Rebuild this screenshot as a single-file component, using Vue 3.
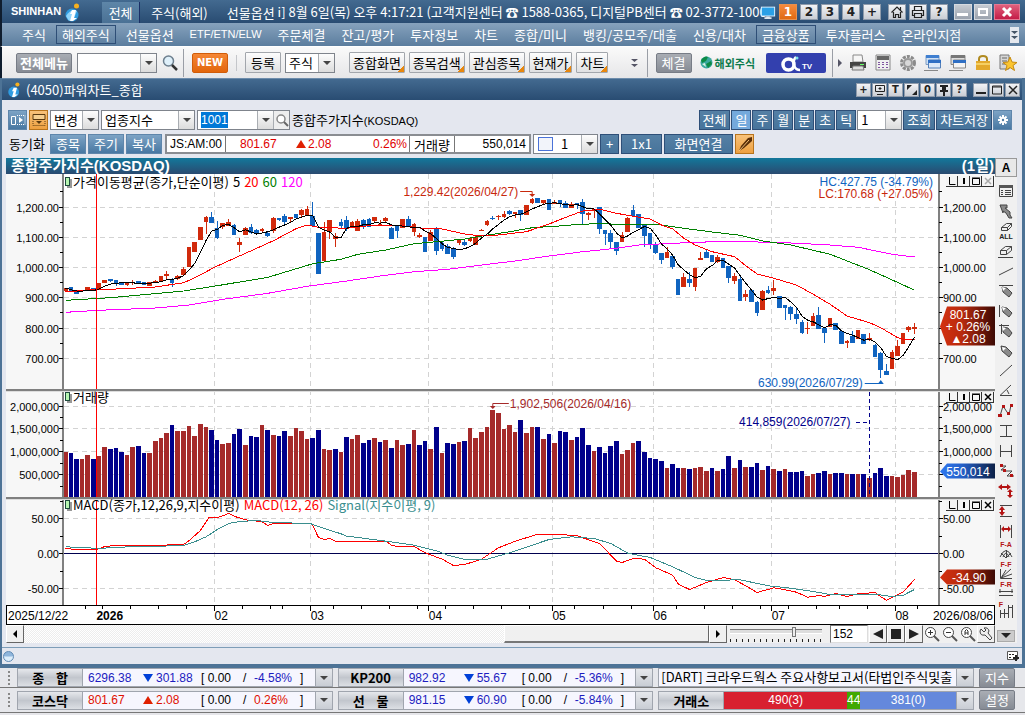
<script setup>
import {ref, computed, onMounted, onBeforeUnmount, useTemplateRef} from 'vue'

const menus = ['주식', '해외주식', '선물옵션', 'ETF/ETN/ELW', '주문체결', '잔고/평가', '투자정보', '차트', '종합/미니', '뱅킹/공모주/대출', '신용/대차', '금융상품', '투자플러스', '온라인지점']
const boxedMenus = ['해외주식', '금융상품']
const quickScreens = ['종합화면', '종목검색', '관심종목', '현재가', '차트']
const periods = ['전체', '일', '주', '월', '분', '초', '틱']

const period = ref('일')
const code = ref('1001')
const barCount = ref('152')
const zoomLevel = ref(70)
const keyword = ref('')

const codeInput = useTemplateRef('codeInput')
const chartBox = useTemplateRef('chartBox')
const width = ref(989)
let observer

onMounted(() => {
    codeInput.value.focus()
    codeInput.value.select()
    width.value = chartBox.value.clientWidth
    observer = new ResizeObserver(() => width.value = chartBox.value.clientWidth)
    observer.observe(chartBox.value)
})
onBeforeUnmount(() => observer.disconnect())

// Candles: [direction, body top, body bottom, high, low], in ticks of 1.1 points below 1369.4
const candles = [
    [1, 399, 407], [0, 396, 409], [0, 408, 416], [0, 406, 409], [1, 396, 406], [0, 400, 404], [1, 384, 402, 384, 406], [1, 375, 384],
    [0, 373, 378, 373, 382], [0, 375, 387, 375, 392], [0, 380, 388], [1, 384, 389, 384, 393], [1, 381, 384, 375, 390], [0, 379, 385, 379, 388],
    [0, 382, 390], [1, 381, 392], [1, 379, 384, 376, 386], [1, 364, 380], [1, 357, 362, 348, 376], [0, 373, 384, 370, 396], [1, 363, 372, 360, 374],
    [1, 342, 359, 336, 359], [1, 276, 335], [1, 261, 290], [1, 216, 254], [1, 186, 200, 183, 236], [0, 186, 203, 171, 203], [0, 219, 248, 199, 254],
    [1, 203, 215, 203, 222], [1, 201, 212, 192, 212], [0, 210, 239, 207, 239], [1, 261, 269, 249, 291], [1, 219, 239, 216, 239], [0, 216, 234, 207, 236],
    [0, 224, 234, 221, 234], [1, 222, 227, 219, 234], [0, 234, 242, 231, 245], [1, 189, 227, 186, 233], [0, 190, 195, 190, 200], [0, 183, 201, 177, 207],
    [1, 186, 193, 186, 203], [0, 177, 188], [1, 165, 180, 162, 188], [1, 162, 180, 153, 180], [0, 183, 212, 141, 212], [0, 234, 356], [1, 231, 317, 201, 317],
    [1, 195, 230, 195, 251], [1, 243, 251, 234, 275], [0, 201, 213, 192, 222], [0, 195, 218, 183, 228], [1, 201, 217, 198, 217], [1, 198, 227, 193, 227],
    [0, 195, 215, 192, 222], [0, 192, 215, 189, 215], [1, 186, 198, 186, 202], [1, 207, 212, 195, 212], [1, 189, 198, 186, 203], [0, 219, 251, 216, 251],
    [0, 213, 228, 213, 248], [1, 192, 218], [0, 192, 215, 183, 215], [1, 207, 230, 204, 242], [1, 240, 245, 234, 248], [0, 246, 291], [1, 231, 257, 225, 257],
    [0, 219, 287, 216, 299], [0, 263, 282, 260, 287], [0, 272, 296, 268, 296], [0, 281, 305, 275, 311], [1, 254, 262, 252, 270], [0, 261, 269, 252, 273],
    [1, 249, 258, 249, 262], [1, 246, 269, 243, 269], [1, 224, 227, 222, 227], [1, 198, 209, 195, 213], [0, 188, 191, 184, 195], [1, 183, 186, 179, 195],
    [1, 177, 186, 168, 189], [0, 168, 177, 165, 180], [1, 171, 178, 171, 188], [0, 165, 179, 165, 197], [1, 150, 179], [1, 132, 143, 128, 147],
    [0, 129, 144], [1, 135, 144, 135, 150], [0, 132, 164], [1, 141, 147, 135, 147], [0, 135, 146, 135, 156], [0, 144, 158, 138, 158], [1, 147, 158, 141, 158],
    [0, 144, 149, 144, 161], [0, 141, 177, 132, 207], [1, 174, 180, 170, 195], [1, 162, 167, 162, 189], [0, 156, 222, 156, 237], [0, 225, 237, 225, 270],
    [0, 234, 260, 225, 279], [0, 261, 287, 261, 299], [1, 240, 260, 231, 260], [1, 189, 230, 186, 230], [0, 165, 182, 150, 182], [0, 177, 218],
    [0, 210, 242, 210, 275], [0, 234, 269, 234, 281], [0, 269, 293, 261, 297], [0, 294, 314, 294, 326], [1, 291, 308, 276, 308], [0, 303, 335, 303, 342],
    [0, 372, 419], [1, 366, 395, 354, 395], [0, 372, 383, 351, 395], [1, 339, 395, 339, 407], [1, 309, 315, 291, 315], [0, 290, 308, 282, 308],
    [0, 300, 320], [1, 306, 320, 300, 324], [0, 309, 338], [0, 333, 368, 333, 383], [1, 363, 377, 354, 386], [0, 372, 437, 363, 437], [1, 417, 425, 405, 437],
    [0, 405, 440], [0, 441, 474, 438, 483], [1, 408, 464, 405, 464], [0, 405, 413, 393, 416], [1, 399, 407, 375, 419], [0, 423, 458], [0, 450, 458, 450, 495],
    [0, 456, 477, 453, 494], [0, 477, 491, 456, 507], [0, 501, 533, 495, 536], [1, 519, 523, 500, 537], [1, 483, 512, 474, 512], [0, 480, 521, 456, 521],
    [0, 518, 534, 518, 563], [1, 489, 515], [0, 505, 527], [0, 528, 566], [1, 558, 564, 555, 579], [0, 543, 563, 528, 563], [1, 525, 552], [0, 537, 566],
    [1, 549, 554, 534, 558], [0, 570, 605, 567, 605], [0, 594, 644, 591, 668], [0, 648, 659, 627, 659], [1, 591, 641, 585, 641], [1, 573, 602, 555, 602],
    [1, 534, 566], [1, 516, 524, 513, 531], [1, 516, 521, 504, 536],
]

// Traded volume in lots of 7,300, negative on a falling bar
const volumes = [
    135, -132, -114, 114, 126, -114, 123, 150, -144, -147, -135, 126, 150, -153, -132, 132, 168, 177, 192, -216, 198, 198, 213, 183, 219, 210, -201,
    -171, 159, 162, -189, -204, 156, -183, -180, 216, -201, 186, -183, -198, 183, 207, 198, 174, -177, -201, 144, 141, -144, 135, -180, 174, 186, -162,
    -171, 177, -165, 171, -147, 171, 156, -159, 201, -156, -168, 144, -210, 132, -162, -159, 165, -168, 207, 177, 195, 210, 261, 252, 204, 216, 195,
    -231, 192, 210, -210, 174, -189, 162, -198, -195, 171, -180, -207, -156, 138, -150, -132, -153, -168, 129, 141, 162, -168, -135, -117, -114, -108,
    87, -99, -87, 87, -84, 87, 90, 78, -87, 78, -84, -123, 87, -111, 90, -90, -102, 81, -93, 84, -78, 84, -75, -75, -78, 63, 69, -72, -78, 69, -72, -72,
    69, -69, 69, -69, 57, -72, -87, -63, 63, 60, 66, 81, 75,
]

// Turning points of the slow averages: [bar, ticks]
const ma20 = [[0, 411], [4, 405], [8, 403], [16, 396], [21, 383], [22, 376], [24.5, 355], [26.5, 337], [30, 310], [34, 280], [37, 257], [41, 221], [43, 210], [45, 217], [50, 220], [55, 210], [59, 210], [64, 221], [67, 222], [71, 237], [74, 243], [77, 240], [82, 230], [86, 207], [89, 187], [92, 168], [95, 163], [98, 175], [100, 181], [104, 192], [106, 210], [108, 222], [110, 250], [112, 270], [115, 290], [119, 305], [121, 332], [123, 357], [126, 370], [130, 390], [133, 418], [136, 448], [139, 483], [143, 503], [145, 518], [148, 548], [149, 553], [151, 553]]
const ma60 = [[0, 436], [8, 428], [21, 408], [27, 392], [36, 367], [44, 326], [49, 313], [52, 298], [57, 285], [62, 266], [66, 260], [71, 252], [74, 243], [79, 230], [83, 218], [87, 214], [90, 210], [94, 206], [100, 208], [106, 210], [110, 220], [115, 231], [120, 241], [124, 258], [129, 270], [136, 298], [143, 344], [149, 390], [151, 406]]
const ma120 = [[0, 472], [6, 466], [16, 459], [22, 450], [28, 433], [36, 415], [43, 394], [50, 378], [56, 363], [62, 350], [68, 343], [74, 330], [80, 318], [86, 303], [92, 290], [98, 280], [102, 270], [108, 265], [117, 259], [121, 260], [128, 263], [136, 270], [141, 277], [147, 298], [151, 306]]
const macd = [[0, 490], [2, 493], [5.5, 493], [7, 484], [9, 481], [13, 482], [17, 481], [19, 478], [21, 478], [22, 466], [24, 436], [25.5, 398], [27, 398], [29, 385], [30.5, 396], [32, 404], [35, 410], [36, 421], [37, 415], [43.5, 415], [44, 422], [45, 457], [46, 463], [47, 460], [48, 468], [55, 470], [57, 468], [58, 480], [59, 484], [62, 484], [64, 503], [67, 522], [69, 541], [71, 538], [74, 522], [77, 488], [80, 468], [84, 447], [88, 448], [91, 452], [95, 475], [98, 528], [99, 532], [101, 520], [103, 522], [105, 548], [108, 570], [109, 597], [111, 613], [114, 592], [117, 577], [119, 584], [121, 602], [123, 622], [126, 608], [128, 614], [130, 621], [132, 636], [134, 631], [135, 634], [137, 625], [139, 634], [141, 626], [144, 622], [145, 635], [146, 645], [149, 620], [151, 583]]
const signal = [[0, 485], [4, 488], [6, 490], [9, 486], [15, 484], [21, 481], [23, 470], [25, 455], [27, 433], [29, 415], [31, 409], [34, 406], [37, 412], [43.5, 415], [46, 430], [49, 446], [50, 453], [52, 457], [57, 468], [62, 480], [66, 497], [68, 510], [71, 523], [75, 522], [79, 503], [83, 480], [86, 463], [90, 455], [94, 460], [97, 475], [100, 504], [104, 517], [108, 545], [112, 577], [114, 586], [120, 584], [125, 602], [128, 607], [133, 619], [136, 628], [144, 627], [147, 634], [149, 630], [151, 613]]

const LEFT = 57
const right = computed(() => width.value - 56)
const step = computed(() => (right.value - LEFT - 27) / (candles.length - 1))

const barX = i => LEFT + 2.5 + i * step.value
const tickY = t => t / 3 - 19
const priceY = p => 32.5 + (1200 - p) * 0.303
const volumeY = v => 323 - v * 22.7 / 500000
const macdY = v => 379.5 - v * 0.7

const toPoints = (list, toY) => list.map(([i, v]) => `${barX(i).toFixed(1)},${toY(v).toFixed(1)}`).join(' ')

const bars = computed(() => candles.map(([up, top, bottom, high = top, low = bottom], i) => {
    const x = LEFT + Math.round(i * step.value)
    const w = LEFT + Math.round((i + 1) * step.value) - x - 1
    const vol = Math.abs(volumes[i]) / 3
    return {
        x, w,
        fill: up ? '#d12a0c' : '#1064c0',
        y: Math.round(tickY(top)),
        h: Math.max(1, Math.round((bottom - top) / 3)),
        wickY: Math.round(tickY(high)),
        wickH: Math.max(1, Math.round((low - high) / 3)),
        volY: 323 - vol,
        volH: vol,
        volFill: volumes[i] > 0 ? '#a52a2a' : '#00008b',
    }
}))

// five day average of the closes
const ma5 = computed(() => {
    const closes = candles.map(([up, top, bottom]) => up ? top : bottom)
    return closes.map((_, i) => {
        const part = closes.slice(Math.max(0, i - 4), i + 1)
        return [i, part.reduce((a, b) => a + b, 0) / part.length]
    })
})

const lines = computed(() => [
    {color: '#f0f', points: toPoints(ma120, tickY)},
    {color: '#008000', points: toPoints(ma60, tickY)},
    {color: '#f00', points: toPoints(ma20, tickY)},
    {color: '#000', points: toPoints(ma5.value, tickY)},
    {color: '#f00', points: toPoints(macd, v => macdY((505 - v) / 2.1))},
    {color: '#3a8e8e', points: toPoints(signal, v => macdY((505 - v) / 2.1))},
])

const levels = [
    ...[1200, 1100, 1000, 900, 800, 700].map(v => ({y: Math.round(priceY(v)) + 0.5, label: v.toLocaleString('en-US') + '.00'})),
    ...[2000000, 1500000, 1000000, 500000].map(v => ({y: Math.floor(volumeY(v)) + 0.5, label: v.toLocaleString('en-US')})),
    ...[50, 0, -50].map(v => ({y: macdY(v), label: v.toFixed(2)})),
]
const hiddenRight = ['800.00', '500,000']
const minorLevels = [17, 48, 78, 108, 138, 169, 243, 266, 289, 312, 327, 362, 397, 414]

const months = [{at: 26.5, label: '02'}, {at: 43.6, label: '03'}, {at: 64.6, label: '04'}, {at: 86.6, label: '05'}, {at: 104.6, label: '06'}, {at: 125.6, label: '07'}, {at: 147.6, label: '08'}]
const dateTicks = [3.5, 6.5, 11.5, 16.5, 21.5, 31.5, 36.5, 38.6, 47.6, 52.6, 57.6, 62.6, 67.6, 72.6, 77.6, 82.6, 90.6, 95.6, 100.6, 108.6, 113.6, 118.6, 123.6, 128.6, 133.6, 137.6, 142.6, 151.6]

const panels = ['price', 'volume', 'macd']

const drawTools = [
    {name: '목록', fill: 'M3 4h14v3H3z', line: 'M3.5 4.5h13v11h-13zM5 9.5h2M9 9.5h6M5 11.5h2M9 11.5h6M5 13.5h2M9 13.5h6'},
    {name: '되돌리기', grey: 'M4 4h7v3h-2l5 4v3l2 3h-3l-3-5-3-2v2z'},
    {name: '모두 지우기', line: 'M5.500 6.500l5-4h5l-4 4zM5.500 6.500v3h6l4-4v-3M11.500 6.500v3', text: 'ALL', textY: 18},
    {name: '지우기', line: 'M4.500 9.500l5-4h6l-5 4zM4.500 9.500v4h6l5-4v-4M10.500 9.500v4M2 16.500h15'},
    {name: '추세선', line: 'M3 14l14-7'},
    {name: '수평선', line: 'M3 4.500h14', grey: 'M6 6l5 1 5 5-3 4-6-5z', pen: true},
    {name: '수직선', line: 'M3.500 4v12', grey: 'M6 6l5 1 5 5-3 4-6-5z', pen: true},
    {name: '십자선', line: 'M3 4.500h10M5.500 3v10', grey: 'M7 6l5 1 4 5-3 4-6-5z', pen: true},
    {name: '펜', grey: 'M5 5l5 1 6 6-3 4-7-6z', pen: true},
    {name: '직선', line: 'M4 15l12-11'},
    {name: '각도', line: 'M15 4L4 14.500h12M11 9l2 4'},
    {name: '파동', line: 'M4 15L7 5l6 9 2-10', red: 'M2 13h4v3H2zM6 4h3v3H6zM11 11h3v3h-3zM14 3h3v3h-3z'},
    {name: '구간', line: 'M4 4.500h12M4 15.500h12M10.500 5v10'},
    {name: '폭', line: 'M4.500 4v12M15.500 4v12M5 10.500h10'},
    {name: '지그재그', line: 'M4 5h6L5 9h5M10 10h6l-5 5h7', red: 'M4 3h3v3H4zM7 8h3v3H7zM14 13h3v3h-3z'},
    {name: '이동', red: 'M2 6l4-3v2h5V3l4 3-4 3V7H6v2zM14 8l3 3h-2v3h2l-3 3-3-3h2v-3h-2z'},
    {name: '높이', line: 'M4 4.500h12M4 15.500h12', red: 'M6 5l3 4H7v2h2l-3 4-3-4h2V9H3z'},
    {name: '너비', line: 'M4.500 4v13M15.500 4v13', red: 'M5 8l3-3v2h4V5l3 3-3 3V9H8v2z'},
    {name: '피보나치 아크', text: 'F-A', textY: 6, line: 'M4 16q6-13 12 0M7 16q3-8 6 0M10.500 9v8M10 17L5 12M10 17l5-5', redText: true},
    {name: '피보나치 팬', text: 'F-F', textY: 6, line: 'M4.500 8v9.500H16M5 17L15 8M5 17l11-4M5 17l5-8', redText: true},
    {name: '피보나치 되돌림', text: 'F-R', textY: 6, line: 'M3 10.500h14M4 8v4M16 8v4M3 14.500h14', redText: true},
    {name: '피보나치 시간대', text: 'F', textY: 6, line: 'M4.500 9v8M8.500 8v9M12.500 4v13M16.500 4v13M4 12.500h8M12 6.500h4', redText: true, left: true},
]

const tickers = [
    {rows: [
        {name: '종    합', value: '6296.38', up: false, diff: '301.88', rate: '-4.58%'},
        {name: 'KP200', value: '982.92', up: false, diff: '55.67', rate: '-5.36%'},
    ]},
    {rows: [
        {name: '코스닥', value: '801.67', up: true, diff: '2.08', rate: '0.26%'},
        {name: '선    물', value: '981.15', up: false, diff: '60.90', rate: '-5.84%'},
    ]},
]
</script>

<template>
    <div class="terminal">
        <header class="titlebar">
            <span class="brand">SHINHAN</span>
            <svg class="brand-mark" width="18" height="20" viewBox="0 0 18 20">
                <circle cx="8" cy="13" r="6.500" fill="#2f9be0"/>
                <path d="M2 14q5-8 11-5l-3 7-5 3z" fill="#8fd4fa"/>
                <path d="M8 8h4l-2 8h3l-4 3H6l2-7H6z" fill="#fff"/>
                <circle cx="12.500" cy="4" r="2.500" fill="#f6b01e"/>
            </svg>
            <button class="world active">전체</button>
            <button class="world">주식(해외)</button>
            <button class="world">선물옵션</button>
            <p class="notice">i] 8월 6일(목) 오후 4:17:21 (고객지원센터 ☎ 1588-0365, 디지털PB센터 ☎ 02-3772-1000</p>
            <div class="title-tools">
                <svg class="monitor" width="16" height="18" viewBox="0 0 18 18">
                    <path d="M1 3h16v11H1z" fill="#eaf6ff"/>
                    <path d="M2 4h14v9H2z" fill="#2aa0e6"/>
                    <path d="M7 14h4v1h2v2H5v-2h2z" fill="#dfe7ee"/>
                </svg>
                <button class="chip hot">1</button>
                <button class="chip">2</button>
                <button class="chip">3</button>
                <button class="chip">4</button>
                <button class="chip">+</button>
                <button class="chip group" aria-label="홈">
                    <svg width="14" height="14" viewBox="0 0 14 14"><path d="M1.500 7.500L7 2l5.500 5.500M3.500 7v5.500h2v-3h3v3h2V7M10.500 2v3" fill="none" stroke="#222" stroke-width="1.200"/></svg>
                </button>
                <button class="chip" aria-label="인쇄">
                    <svg width="14" height="14" viewBox="0 0 14 14"><path d="M3.500 5V1.500h7V5M3.500 10.500h-2v-5h11v5h-2M3.500 8.500h7v4h-7z" fill="none" stroke="#222" stroke-width="1.200"/></svg>
                </button>
                <button class="chip">?</button>
                <div class="wins">
                    <button class="win" aria-label="최소화"><svg width="16" height="14" viewBox="0 0 16 14"><path d="M2 8h11v3H2z" fill="#fff"/></svg></button>
                    <button class="win" aria-label="최대화"><svg width="16" height="14" viewBox="0 0 16 14"><path d="M4 4h8v6H4z" fill="none" stroke="#fff" stroke-width="2"/></svg></button>
                    <button class="win close" aria-label="닫기"><svg width="24" height="14" viewBox="0 0 24 14"><path d="M8 3l8 8M16 3l-8 8" stroke="#fff" stroke-width="3"/></svg></button>
                </div>
            </div>
        </header>

        <nav class="menubar">
            <a v-for="menu in menus" :key="menu" href="#" :class="{boxed: boxedMenus.includes(menu), latin: menu.startsWith('ETF')}">{{ menu }}</a>
            <button class="more" aria-label="더보기"><svg width="9" height="14" viewBox="0 0 9 14"><path d="M1 3h7L4.500 6zM1 8h7l-3.500 3z" fill="#456"/></svg></button>
        </nav>

        <div class="toolbar">
            <button class="pill">전체메뉴</button>
            <label class="combo search-box"><input v-model="keyword" aria-label="화면 검색"><i></i></label>
            <svg class="lens" width="18" height="18" viewBox="0 0 18 18">
                <circle cx="7.500" cy="7" r="5" fill="#dff0fa" stroke="#6d7f8e" stroke-width="1.500"/>
                <path d="M11 11l5 5" stroke="#333" stroke-width="2.500"/>
            </svg>
            <span class="bar-line"></span>
            <button class="new">NEW</button>
            <span class="bar-line thin"></span>
            <button class="flat">등록</button>
            <label class="combo kind"><select aria-label="상품"><option>주식</option></select><i></i></label>
            <div class="quick">
                <button v-for="screen in quickScreens" :key="screen" class="flat corner">{{ screen }}</button>
            </div>
            <svg class="chevrons" width="9" height="14" viewBox="0 0 9 14"><path d="M1 3h7L4.500 6zM1 8h7l-3.500 3z" fill="#556"/></svg>
            <span class="bar-line"></span>
            <button class="pill slim">체결</button>
            <a href="#" class="overseas">
                <svg width="13" height="13" viewBox="0 0 13 13"><circle cx="6.500" cy="6.500" r="6" fill="#3ba9a0"/><path d="M1 4q4-5 7-3l-2 4-4 2zM6 8l5-3 1 3-4 4z" fill="#0b8b45"/><path d="M2 8l3-1 1 4z" fill="#d8f2e4"/></svg>
                해외주식
            </a>
            <button class="tv" aria-label="알파TV">
                <svg width="22" height="18" viewBox="0 0 22 18">
                    <circle cx="8.500" cy="9.500" r="5.500" fill="none" stroke="#fff" stroke-width="3.500"/>
                    <path d="M16 2q-4 4-1.500 9.500Q16 15 20 15" fill="none" stroke="#fff" stroke-width="2.500"/>
                    <circle cx="17" cy="3" r="1.500" fill="#7de0e8"/>
                </svg>
                <span>TV</span>
            </button>
            <span class="bar-line end"></span>
            <div class="tool-icons">
                <svg width="4" height="8" viewBox="0 0 4 8"><path d="M0 0l4 4-4 4z" fill="#556"/></svg>
                <svg width="18" height="18" viewBox="0 0 18 18"><path d="M4 1h9l1 7H4z" fill="#f6f6f6" stroke="#888"/><path d="M1 8h16v6H1z" fill="#444"/><path d="M4 12h10l1 4H3z" fill="#ddd" stroke="#777"/><path d="M11 10h4v1h-4z" fill="#6f6"/></svg>
                <svg width="18" height="18" viewBox="0 0 18 18"><path d="M2 1h14v15H2z" fill="#f0f0f0" stroke="#888"/><path d="M3 2h12v4H3z" fill="#666"/><path d="M4 8h2v1H4zM8 8h2v1H8zM12 8h2v1h-2zM4 10h2v1H4zM8 10h2v1H8zM12 10h2v1h-2zM4 13h2v1H4zM8 13h2v1H8zM12 13h2v1h-2z" fill="#8054a0"/></svg>
                <svg width="18" height="18" viewBox="0 0 18 18"><circle cx="9" cy="9" r="6.500" fill="none" stroke="#8b8b8b" stroke-width="3" stroke-dasharray="3 1.100"/><circle cx="9" cy="9" r="4" fill="#d8d8d8" stroke="#999" stroke-width="2"/></svg>
                <svg width="18" height="18" viewBox="0 0 18 18"><path d="M2 1.500h13v9H2z" fill="#cfe0f4" stroke="#7d9cc4"/><path d="M2 1h13v3H2z" fill="#3f7fd0"/><path d="M4.500 6h12v8h-12z" fill="#dce9f9" stroke="#5580b8"/><path d="M4 6h13v3H4z" fill="#2f6fc4"/><path d="M0 16.500h14" stroke="#888"/></svg>
                <svg width="18" height="18" viewBox="0 0 18 18"><path d="M2 1.500h14v9H2z" fill="#ddd" stroke="#888"/><path d="M2 1h14v3H2z" fill="#777"/><path d="M4.500 6h12v8h-12z" fill="#f4f4f4" stroke="#888"/><path d="M4 6h13v3H4z" fill="#2f6fc4"/><path d="M0 16.500h14" stroke="#888"/></svg>
                <svg width="18" height="18" viewBox="0 0 18 18"><path d="M5 8V5q0-3 4-3t4 3v3" fill="none" stroke="#b08a20" stroke-width="2"/><path d="M2 7h14v9H2z" fill="#e3a92c"/><path d="M2 9h14v2H2z" fill="#f5cf62"/></svg>
                <svg width="18" height="18" viewBox="0 0 18 18"><path d="M1 1h9v14H1z" fill="#d6d6d6" stroke="#777"/><path d="M3 4h5M3 7h5M3 10h4" stroke="#666"/><path d="M11 3l2 5 5 .500-4 3 1.500 5-4.500-3-4.500 3L8 11.500l-4-3L9 8z" fill="#fbc531" stroke="#c58a12"/></svg>
            </div>
        </div>

        <section class="window">
            <div class="caption">
                <svg width="15" height="17" viewBox="0 0 18 20">
                    <circle cx="8" cy="13" r="6.500" fill="#2f9be0"/>
                    <path d="M8 8h4l-2 8h3l-4 3H6l2-7H6z" fill="#fff"/>
                    <circle cx="12.500" cy="4" r="2.500" fill="#f6b01e"/>
                </svg>
                <h1>(4050)파워차트_종합</h1>
                <div class="caption-tools">
                    <button>+</button>
                    <button aria-label="화면"><svg width="12" height="12" viewBox="0 0 12 12"><path d="M1.500 1.500h9v6h-9zM3 10.500h6M6 3v3M4.500 4.500h3" fill="none" stroke="#222"/></svg></button>
                    <button>T</button>
                    <button aria-label="크기"><svg width="12" height="12" viewBox="0 0 12 12"><path d="M1 1h5L1 6zM11 11H6l5-5z" fill="#222"/></svg></button>
                    <button>0</button>
                    <button aria-label="고정"><svg width="12" height="12" viewBox="0 0 12 12"><path d="M2 1h8v2H8v3h2v2H2V6h2V3H2zM5 8h2v4H5z" fill="#222"/></svg></button>
                    <button>?</button>
                    <button class="group" aria-label="최소화"><svg width="12" height="12" viewBox="0 0 12 12"><path d="M1 8h10v2H1z" fill="#222"/></svg></button>
                    <button aria-label="최대화"><svg width="12" height="12" viewBox="0 0 12 12"><path d="M1.500 2h9v8h-9zM1 3h10" fill="none" stroke="#222"/></svg></button>
                    <button aria-label="닫기"><svg width="12" height="12" viewBox="0 0 12 12"><path d="M2 2l8 8M10 2l-8 8" stroke="#222" stroke-width="1.500"/></svg></button>
                </div>
            </div>

            <div class="controls">
                <button class="blue square" aria-label="패널"><svg width="16" height="12" viewBox="0 0 16 12"><path d="M1.500 2.500h4v8h-4z" fill="none" stroke="#fff"/><path d="M7 1.500h8v9H7" fill="none" stroke="#fff" stroke-dasharray="1 1"/><path d="M9 3l4 3-4 3z" fill="#fff"/></svg></button>
                <button class="orange square" aria-label="펼치기"><svg width="16" height="14" viewBox="0 0 16 14"><path d="M2 1.500h12v5H2z" fill="#f6cf8f" stroke="#5a3a10"/><path d="M2 8v4.500h12V8" fill="none" stroke="#5a3a10" stroke-dasharray="1 1"/><path d="M5 8h6l-3 3z" fill="#5a3a10"/></svg></button>
                <label class="combo w49"><select aria-label="설정"><option>변경</option></select><i></i></label>
                <label class="combo w94"><select aria-label="구분"><option>업종지수</option></select><i></i></label>
                <div class="combo w93 code">
                    <input ref="codeInput" v-model="code" class="num" aria-label="종목코드"><i></i>
                    <button aria-label="찾기"><svg width="14" height="14" viewBox="0 0 14 14"><circle cx="6" cy="6" r="4" fill="#fff" stroke="#888" stroke-width="1.500"/><path d="M9 9l4 4" stroke="#666" stroke-width="2"/></svg></button>
                </div>
                <span class="issue">종합주가지수<span class="latin">(KOSDAQ)</span></span>
                <div class="right-side">
                    <button v-for="name in periods" :key="name" class="steel" :class="{on: name === period}" @click="period = name">{{ name }}</button>
                    <label class="combo w45"><select aria-label="간격"><option>1</option></select><i></i></label>
                    <button class="steel">조회</button>
                    <button class="steel">차트저장</button>
                    <button class="blue square gear" aria-label="설정"><svg width="12" height="12" viewBox="0 0 12 12"><path d="M6 1v10M1 6h10M2.500 2.500l7 7M9.500 2.500l-7 7" stroke="#fff" stroke-width="2"/><circle cx="6" cy="6" r="3" fill="#fff"/><circle cx="6" cy="6" r="1.200" fill="#4f7ba3"/></svg></button>
                </div>
            </div>

            <div class="controls second">
                <span class="sync">동기화</span>
                <button class="blue">종목</button>
                <button class="blue">주기</button>
                <button class="blue">복사</button>
                <div class="quote">
                    <span class="src num">JS:AM:00</span>
                    <span class="nums num"><b>801.67</b><b><i class="tri up"></i>2.08</b><b class="end">0.26%</b></span>
                    <span class="cap">거래량</span>
                    <span class="vol num">550,014</span>
                </div>
                <label class="combo w65"><span class="swatch"></span><select aria-label="배열"><option>1</option></select><i></i></label>
                <button class="steel plus">+</button>
                <button class="steel grid">1x1</button>
                <button class="steel link">화면연결</button>
                <button class="orange square" aria-label="그리기"><svg width="16" height="16" viewBox="0 0 16 16"><path d="M2 15l2-5 7-8 4-1v4L7 12z" fill="#5a2f08"/><path d="M2 15L12 4" stroke="#f4c27a"/></svg></button>
            </div>

            <div class="work">
                <div class="chart">
                    <div class="chart-title"><h2>종합주가지수(KOSDAQ)</h2><span>(1일)</span></div>
                    <div ref="chartBox" class="canvas">
                        <svg :width="width" height="451" class="plot">
                            <defs>
                                <linearGradient id="tagRed"><stop offset="0" stop-color="#d4300f"/><stop offset=".4" stop-color="#b82a0e"/><stop offset="1" stop-color="#3c0a04"/></linearGradient>
                                <linearGradient id="tagBlue"><stop offset="0" stop-color="#2f78f0"/><stop offset=".4" stop-color="#2560c8"/><stop offset="1" stop-color="#0c2047"/></linearGradient>
                            </defs>
                            <rect width="100%" height="451" fill="#f7f7f7"/>
                            <rect :x="LEFT" y="0" :width="right - LEFT" height="431" fill="#fff"/>

                            <g shape-rendering="crispEdges">
                                <g stroke="#d3d3d3" stroke-dasharray="5 4">
                                    <template v-for="level in levels" :key="level.label">
                                        <line v-if="level.label !== '0.00'" :x1="LEFT + 1" :x2="right" :y1="level.y" :y2="level.y"/>
                                    </template>
                                    <line v-for="month in months" :key="month.label" :x1="barX(month.at)" :x2="barX(month.at)" y1="0" y2="431"/>
                                </g>
                                <line :x1="LEFT" :x2="right" y1="379.5" y2="379.5" stroke="#00004f"/>

                                <rect v-for="(bar, i) in bars" :key="'v' + i" :x="bar.x" :y="bar.volY" :width="bar.w" :height="bar.volH" :fill="bar.volFill"/>
                                <g v-for="(bar, i) in bars" :key="'c' + i" :fill="bar.fill">
                                    <rect :x="bar.x" :y="bar.y" :width="bar.w" :height="bar.h"/>
                                    <rect :x="bar.x + 2" :y="bar.wickY" width="1" :height="bar.wickH"/>
                                </g>
                                <polyline v-for="(line, i) in lines" :key="'l' + i" :points="line.points" :stroke="line.color" fill="none"/>

                                <line :x1="barX(5.5)" :x2="barX(5.5)" y1="0" y2="431" stroke="#f00"/>
                                <path :d="`M${LEFT} 0V431M${right} 0V431`" stroke="#808080" stroke-width="2"/>
                                <path :d="`M0 216H${width}M0 324H${width}`" stroke="#808080" stroke-width="2"/>
                                <path :d="`M0 217.500H${width}M0 325.500H${width}`" stroke="#ddd"/>
                                <g stroke="#000">
                                    <path v-for="level in levels" :key="level.label" :d="`M${LEFT - 4} ${level.y}h4M${right} ${level.y}h4`"/>
                                    <path v-for="y in minorLevels" :key="y" :d="`M${LEFT - 3} ${y + 0.5}h3M${right} ${y + 0.5}h3`"/>
                                </g>
                                <rect x="0.500" y="431.500" :width="width - 1" height="19" fill="#fff" stroke="#000"/>
                                <line v-for="at in dateTicks" :key="at" :x1="barX(at)" :x2="barX(at)" y1="432" y2="435" stroke="#000"/>
                                <line v-for="month in months" :key="month.label" :x1="barX(month.at)" :x2="barX(month.at)" y1="432" y2="437" stroke="#000"/>
                            </g>

                            <g v-for="level in levels" :key="level.label" class="axis">
                                <text :x="LEFT - 4" :y="level.y + 4" text-anchor="end">{{ level.label }}</text>
                                <text v-if="!hiddenRight.includes(level.label)" :x="right + 4" :y="level.y + 4">{{ level.label }}</text>
                            </g>

                            <g v-for="y in [3, 218, 326]" :key="y">
                                <rect x="61" :y="y + 2" width="5" height="9" fill="#999"/>
                                <rect x="59.500" :y="y + 0.5" width="4" height="8" fill="#b6f5b0" stroke="#1e4a3c"/>
                            </g>
                            <g class="legend">
                                <text x="67" y="13">가격이동평균(종가,단순이평)<tspan dx="4">5</tspan><tspan dx="4" fill="#f00">20</tspan><tspan dx="4" fill="#008000">60</tspan><tspan dx="4" fill="#f0f">120</tspan></text>
                                <text x="67" y="228">거래량</text>
                                <text x="67" y="336">MACD(종가,12,26,9,지수이평)<tspan dx="4" fill="#f00">MACD(12, 26)</tspan><tspan dx="4" fill="#3a8e8e">Signal(지수이평, 9)</tspan></text>
                            </g>

                            <text :x="right - 6" y="12" text-anchor="end" fill="#1064c0">HC:427.75 (-34.79%)</text>
                            <text :x="right - 6" y="24" text-anchor="end" fill="#c8280c">LC:170.68 (+27.05%)</text>

                            <g fill="#c8280c">
                                <text :x="barX(83) - 14" y="22" text-anchor="end">1,229.42(2026/04/27)</text>
                                <path :d="`M${barX(83) - 12} 17.500h12v3`" fill="none" stroke="#c8280c"/>
                                <path :d="`M${barX(83) - 3} 20h6l-3 3z`"/>
                            </g>
                            <g fill="#1064c0">
                                <text :x="barX(145) - 18" y="213" text-anchor="end">630.99(2026/07/29)</text>
                                <path :d="`M${barX(145) - 16} 209.500h18`" stroke="#1064c0"/>
                                <path :d="`M${barX(145) - 3} 210h6l-3-4z`"/>
                            </g>
                            <g fill="#a52a2a">
                                <text :x="barX(76) + 17" y="234">1,902,506(2026/04/16)</text>
                                <path :d="`M${barX(76) + 16} 229.500h-16v3`" fill="none" stroke="#a52a2a"/>
                                <path :d="`M${barX(76) - 3} 232h6l-3 3z`"/>
                            </g>
                            <text :x="barX(143) - 19" y="252" text-anchor="end" fill="#00008b">414,859(2026/07/27)</text>
                            <path :d="`M${barX(143) - 14} 248.500h14M${barX(143)} 218v103`" fill="none" stroke="#00008b" stroke-dasharray="4 3" shape-rendering="crispEdges"/>

                            <g text-anchor="middle">
                                <path :d="`M${right + 1} 152.500l7-20H${width}v39H${right + 8}z`" fill="url(#tagRed)"/>
                                <g fill="#fff">
                                    <text :x="right + 29" y="145">801.67</text>
                                    <text :x="right + 29" y="157">+ 0.26%</text>
                                    <text :x="right + 29" y="169">▲2.08</text>
                                </g>
                                <path :d="`M${right + 1} 297.500l7-8H${width}v15H${right + 8}z`" fill="url(#tagBlue)"/>
                                <text :x="right + 29" y="302" fill="#fff">550,014</text>
                                <path :d="`M${right + 1} 403.500l7-8H${width}v15H${right + 8}z`" fill="url(#tagRed)"/>
                                <text :x="right + 30" y="408" fill="#fff">-34.90</text>
                            </g>

                            <text x="2" y="446">2025/12/22</text>
                            <text :x="barX(5.5)" y="446" font-weight="bold">2026</text>
                            <text v-for="month in months" :key="month.label" :x="barX(month.at)" y="446">{{ month.label }}</text>
                            <text :x="width - 2" y="446" text-anchor="end">2026/08/06</text>
                        </svg>
                        <div v-for="panel in panels" :key="panel" class="panel-buttons" :class="panel">
                            <button aria-label="축소"><svg width="10" height="10" viewBox="0 0 10 10"><path d="M2.500 1v7.500h6" fill="none" stroke="#000"/></svg></button>
                            <button aria-label="분할"><svg width="10" height="10" viewBox="0 0 10 10"><path d="M4 2h2v6H4z"/></svg></button>
                            <button aria-label="확대"><svg width="10" height="10" viewBox="0 0 10 10"><path d="M1.500 2.500h7v6h-7zM1 2h8" fill="none" stroke="#000"/></svg></button>
                            <button aria-label="닫기"><svg width="10" height="10" viewBox="0 0 10 10"><path d="M2 2l6 6M8 2L2 8" :stroke="panel === 'price' ? '#aaa' : '#000'" stroke-width="1.500"/></svg></button>
                        </div>
                    </div>

                    <div class="bottom">
                        <button class="raised" aria-label="이전"><svg width="6" height="8" viewBox="0 0 6 8"><path d="M5 0v8L1 4z"/></svg></button>
                        <div class="track"><div class="thumb"></div></div>
                        <button class="raised" aria-label="다음"><svg width="6" height="8" viewBox="0 0 6 8"><path d="M1 0v8l4-4z"/></svg></button>
                        <div class="zoomer"><input v-model="zoomLevel" type="range" min="0" max="100" aria-label="확대 비율"></div>
                        <input v-model="barCount" class="count num" aria-label="봉 개수">
                        <button class="raised" aria-label="뒤로"><svg width="12" height="12" viewBox="0 0 12 12"><path d="M11 1v10L1 6z" fill="#222"/></svg></button>
                        <button class="raised" aria-label="정지"><svg width="12" height="12" viewBox="0 0 12 12"><path d="M1 1h10v10H1z" fill="#222"/></svg></button>
                        <button class="raised" aria-label="앞으로"><svg width="12" height="12" viewBox="0 0 12 12"><path d="M1 1v10l10-5z" fill="#222"/></svg></button>
                        <button class="bare" aria-label="확대"><svg width="16" height="16" viewBox="0 0 16 16"><circle cx="6.500" cy="6.500" r="5" fill="#fff" stroke="#444"/><path d="M4 6.500h5M6.500 4v5" stroke="#333"/><path d="M10 10l5 5" stroke="#555" stroke-width="2"/></svg></button>
                        <button class="bare" aria-label="축소"><svg width="16" height="16" viewBox="0 0 16 16"><circle cx="6.500" cy="6.500" r="5" fill="#fff" stroke="#444"/><path d="M4 6.500h5" stroke="#333"/><path d="M10 10l5 5" stroke="#555" stroke-width="2"/></svg></button>
                        <button class="bare" aria-label="전체 보기"><svg width="16" height="16" viewBox="0 0 16 16"><circle cx="6.500" cy="6.500" r="5" fill="#fff" stroke="#444"/><path d="M5 9V5l1.500-1.500L8 5v4M5 7h3" fill="none" stroke="#333"/><path d="M10 10l5 5" stroke="#555" stroke-width="2"/></svg></button>
                        <button class="raised" aria-label="도구"><svg width="14" height="14" viewBox="0 0 14 14"><path d="M2 2l3 3 2-2-2-2q4-1 5 3l-1 2 4 5-2 2-5-5q-5 1-5-4z" fill="#eee" stroke="#444"/></svg></button>
                    </div>
                </div>

                <aside class="rail">
                    <button class="auto">A</button>
                    <button v-for="tool in drawTools" :key="tool.name" class="draw" :aria-label="tool.name">
                        <svg width="20" height="20" viewBox="0 0 20 20">
                            <path v-if="tool.grey" :d="tool.grey" fill="#8a8a8a" stroke="#444"/>
                            <path v-if="tool.pen" d="M6 6l4 1-3 3z" fill="#fff"/>
                            <path v-if="tool.line" :d="tool.line" fill="none" stroke="#444"/>
                            <path v-if="tool.fill" :d="tool.fill" fill="#555"/>
                            <path v-if="tool.red" :d="tool.red" fill="#b41414"/>
                            <text v-if="tool.text" :x="tool.left ? 5 : 10" :y="tool.textY" text-anchor="middle" :fill="tool.redText ? '#b41414' : '#222'">{{ tool.text }}</text>
                        </svg>
                    </button>
                    <button class="down" aria-label="더보기"><svg width="10" height="6" viewBox="0 0 10 6"><path d="M0 0h10L5 5z" fill="#222"/></svg></button>
                </aside>
            </div>

            <footer class="status">
                <span class="orb"></span>
                <button aria-label="메시지"><svg width="14" height="12" viewBox="0 0 14 12"><path d="M1.500 1.500h10v8h-10z" fill="#fff" stroke="#555"/><path d="M3 4h2v1H3zM6 4h2v1H6zM3 7h2v1H3zM9 5h2v2h2v2h-2v2H9V9H7V7h2z" fill="#222"/></svg></button>
            </footer>
        </section>

        <section class="tickers">
            <div v-for="(line, n) in tickers" :key="n" class="ticker-row">
                <span class="grip"></span>
                <div v-for="item in line.rows" :key="item.name" class="ticker">
                    <button class="name">{{ item.name }}</button>
                    <div class="figures num" :class="item.up ? 'rise' : 'fall'">
                        <span>{{ item.value }}</span>
                        <i class="tri" :class="item.up ? 'up' : 'dn'"></i>
                        <span>{{ item.diff }}</span>
                        <span class="dark">[ 0.00</span>
                        <span class="dark">/</span>
                        <span>{{ item.rate }}</span>
                        <span class="dark">]</span>
                    </div>
                    <button class="drop" aria-label="목록"></button>
                </div>
                <div v-if="n === 0" class="ticker">
                    <p class="news">[DART] 크라우드웍스 주요사항보고서(타법인주식및출</p>
                    <button class="drop" aria-label="목록"></button>
                </div>
                <div v-else class="ticker">
                    <button class="name">거래소</button>
                    <div class="breadth num"><span class="ups">490(3)</span><span class="flats">44</span><span class="downs">381(0)</span></div>
                    <button class="drop" aria-label="목록"></button>
                </div>
                <button class="pill side">{{ n === 0 ? '지수' : '설정' }}</button>
            </div>
        </section>
    </div>
</template>

<style>
body {
    margin: 0;
    background: #e6e6ea;
}
</style>

<style scoped>
* {
    box-sizing: border-box;
}

.terminal {
    font: 13px/16px "Noto Sans CJK KR", sans-serif;
    color: #000;
    min-height: 100vh;
    display: flex;
    flex-direction: column;
    overflow: hidden;
}

button, input, select {
    font: inherit;
    color: inherit;
    margin: 0;
    padding: 0;
    border: 0;
    background: none;
    border-radius: 0;
    outline: none;
    min-width: 0;
}

button {
    display: flex;
    align-items: center;
    justify-content: center;
    white-space: nowrap;
    flex-shrink: 0;
}

svg {
    display: block;
    flex-shrink: 0;
}

h1, h2, p {
    font: inherit;
    margin: 0;
}

a {
    color: inherit;
    text-decoration: none;
}

.num {
    font-family: "Liberation Sans", sans-serif;
    font-size: 12px;
}

.latin {
    font-family: "Liberation Sans", sans-serif;
    font-size: 11px;
}

.titlebar {
    height: 23px;
    display: flex;
    align-items: center;
    color: #fff;
    background: linear-gradient(#436a90, #294c72);
    border-left: 2px solid #0f1d2e;
    padding: 0 5px 0 9px;
}

.brand {
    font: bold 11px/23px "Liberation Sans", sans-serif;
}

.brand-mark {
    margin: 0 20px 0 3px;
}

.world {
    height: 21px;
    align-self: flex-end;
    margin-right: 19px;
}

.world.active {
    width: 38px;
    margin-right: 11px;
    background: linear-gradient(#5e86a8, #4a7195);
    border-right: 1px solid #1a2f66;
}

.notice {
    flex: 1;
    min-width: 0;
    overflow: hidden;
    white-space: nowrap;
    margin-left: -16px;
}

.title-tools {
    display: flex;
    align-items: center;
    gap: 3px;
    margin-left: -20px;
    z-index: 1;
}

.chip, .caption-tools button {
    width: 18px;
    height: 16px;
    color: #222;
    font: bold 12px/14px "DejaVu Sans", sans-serif;
    background: linear-gradient(#f2f3f5, #c9cdd4);
    border: 1px solid #8f9bab;
}

.chip.hot {
    color: #fff;
    background: linear-gradient(#f58a3c, #e06a14);
    border-color: #e8904c;
}

.chip.group {
    margin-left: 4px;
}

.wins {
    display: flex;
    gap: 2px;
    margin-left: 3px;
}

.win {
    height: 16px;
    background: linear-gradient(#c6cbd2, #9ba3ae);
    border: 1px solid #d5dae0;
}

.win.close {
    background: linear-gradient(#e0607c, #c41c48);
    border-color: #e27a94;
}

.menubar {
    height: 23px;
    display: flex;
    align-items: center;
    gap: 4px;
    color: #fff;
    background: linear-gradient(#86a2bd, #5b7d9e);
    border-left: 2px solid #0f1d2e;
    padding: 0 6px 0 14px;
    white-space: nowrap;
}

.menubar a {
    line-height: 17px;
    padding: 0 5px;
    border: 1px solid transparent;
}

.menubar a.boxed {
    border-color: #2e4e76;
}

.more {
    margin-left: auto;
    height: 16px;
    background: #e4e8ee;
}

.toolbar {
    height: 32px;
    display: flex;
    align-items: center;
    background: linear-gradient(#fafafa, #e6e6e8);
    border-left: 2px solid #0f1d2e;
    border-top: 1px solid #fff;
    padding: 0 8px 0 14px;
}

.pill {
    width: 56px;
    height: 20px;
    color: #fff;
    font-weight: bold;
    background: linear-gradient(#a9adb4, #868b94);
    border: 1px solid #777c86;
    border-radius: 2px;
}

.pill.slim {
    width: 36px;
    font-weight: normal;
    margin-left: 8px;
}

.combo {
    display: flex;
    align-items: stretch;
    height: 20px;
    background: #fff;
    border: 1px solid #7f848c;
    flex-shrink: 0;
}

.combo select, .combo input {
    appearance: none;
    flex: 1;
    padding-left: 3px;
}

.combo i {
    width: 16px;
    background: linear-gradient(#fdfdfd, #dcdcdc);
    border-left: 1px solid #a9adb2;
    display: flex;
    align-items: center;
    justify-content: center;
}

.combo i::after, .drop::after {
    content: "";
    border: 4px solid transparent;
    border-top-color: #444;
    border-bottom: 0;
}

.search-box {
    width: 80px;
    margin-left: 5px;
}

.lens {
    margin: 0 4px;
}

.bar-line {
    width: 1px;
    height: 28px;
    background: #9a9ea6;
    flex-shrink: 0;
}

.bar-line.thin {
    height: 16px;
    background: #c4c6ca;
    margin: 0 8px;
}

.new {
    width: 36px;
    height: 20px;
    margin-left: 8px;
    color: #fff;
    font: bold 10px/18px "DejaVu Sans", sans-serif;
    background: linear-gradient(#f58634, #e2660c);
    border: 1px solid #d05c0a;
    border-radius: 2px;
}

.flat {
    height: 21px;
    width: 36px;
    background: linear-gradient(#fdfdfd, #dfe0e2);
    border: 1px solid #a2a6ac;
    border-radius: 1px;
}

.kind {
    width: 50px;
    margin-left: 4px;
}

.quick {
    display: flex;
    gap: 4px;
    margin-left: 14px;
}

.corner {
    width: auto;
    padding: 0 3px;
    background: linear-gradient(135deg, transparent 5px, #e8870e 5px) 100% 100% / 7px 7px no-repeat, linear-gradient(#fdfdfd, #dfe0e2);
}

.chevrons {
    margin: 0 8px 0 auto;
}

.overseas {
    display: flex;
    align-items: center;
    gap: 2px;
    margin-left: 8px;
    font-size: 11px;
    font-weight: bold;
    color: #0b7a4b;
    white-space: nowrap;
}

.tv {
    width: 60px;
    height: 20px;
    margin-left: 11px;
    color: #fff;
    font: bold 8px/8px "Liberation Sans", sans-serif;
    background: #3340ae;
    border-radius: 2px;
    align-items: flex-end;
}

.tv span {
    padding-bottom: 2px;
}

.bar-line.end {
    margin: 0 5px 0 6px;
}

.tool-icons {
    display: flex;
    align-items: center;
    gap: 7px;
}

.window {
    background: #e4e7ef;
    border: solid #4d7396;
    border-width: 0 3px 4px 2px;
}

.caption {
    height: 22px;
    display: flex;
    align-items: center;
    gap: 4px;
    color: #fff;
    background: linear-gradient(#436a90, #294c72);
    border-top: 1px solid #6d8cab;
    padding: 0 2px 0 5px;
}

.caption-tools {
    display: flex;
    gap: 1px;
    margin-left: auto;
}

.caption-tools button {
    width: 15px;
    height: 14px;
    font-size: 10px;
    line-height: 12px;
}

.caption-tools .group {
    margin-left: 5px;
}

.controls {
    display: flex;
    align-items: center;
    gap: 2px;
    height: 20px;
    margin: 10px 10px 0 6px;
    white-space: nowrap;
}

.controls.second {
    margin-top: 4px;
}

.blue {
    width: 36px;
    height: 20px;
    color: #fff;
    background: linear-gradient(#7da3c5, #4878a2);
    border: 1px solid #5f86ab;
}

.orange {
    height: 20px;
    background: linear-gradient(#f8c27a, #eda040);
    border: 1px solid #b8741c;
}

.square {
    width: 19px;
}

.w45 { width: 45px; }
.w49 { width: 49px; }
.w65 { width: 65px; }
.w93 { width: 93px; }
.w94 { width: 94px; }

.code button {
    width: 16px;
    border-left: 1px solid #a9adb2;
    background: #eee;
}

.code input::selection {
    color: #fff;
    background: #0078d7;
}

.right-side {
    display: flex;
    gap: 1px;
    margin-left: auto;
}

.steel {
    height: 20px;
    min-width: 19px;
    padding: 0 3px;
    color: #fff;
    background: linear-gradient(#5580a5, #47749b);
    border: 1px solid #2e4f78;
}

.steel.on {
    background: #74a9dc;
}

.sync {
    width: 40px;
    padding-left: 1px;
}

.quote {
    display: flex;
    height: 20px;
    width: 366px;
    margin-left: 1px;
    line-height: 17px;
    background: #fff;
    border: 2px solid #8a8d92;
}

.quote span + span {
    border-left: 1px solid #777;
}

.src {
    width: 58px;
    padding-left: 3px;
}

.cap {
    width: 45px;
    padding-left: 4px;
}

.nums {
    flex: 1;
    display: grid;
    grid-template-columns: 56px 60px 1fr;
    padding: 0 2px 0 14px;
    color: #e00000;
}

.nums b {
    font-weight: normal;
}

.nums .end {
    text-align: right;
}

.vol {
    width: 75px;
    text-align: right;
    padding-right: 3px;
}

.tri {
    display: inline-block;
    width: 0;
    border: 5px solid transparent;
    margin-right: 2px;
}

.tri.up {
    border-top: 0;
    border-bottom: 8px solid #e02000;
}

.tri.dn {
    border-bottom: 0;
    border-top: 8px solid #0040d8;
}

.swatch {
    width: 15px;
    margin: 2px 5px 2px 4px;
    background: #f2f4fa;
    border: 1px solid #4a72d8;
}

.steel.grid {
    width: 41px;
}

.steel.link {
    width: 69px;
}

.work {
    display: flex;
    margin: 4px 5px 0 4px;
}

.chart {
    flex: 1;
    min-width: 0;
}

.chart-title {
    height: 16px;
    display: flex;
    justify-content: space-between;
    padding: 0 1px 0 5px;
    color: #fff;
    font: bold 15px/16px "Liberation Sans", "Noto Sans CJK KR", sans-serif;
    background: linear-gradient(#13789b, #2a4a70);
}

.canvas {
    position: relative;
    height: 451px;
    overflow: hidden;
}

.plot text {
    font: 12px "Liberation Sans", sans-serif;
}

.plot text[font-weight] {
    font-weight: bold;
}

.plot .axis text {
    font-size: 11px;
}

.plot .legend text {
    font: 13px "Noto Sans CJK KR", sans-serif;
}

.panel-buttons {
    position: absolute;
    right: 1px;
    display: flex;
}

.panel-buttons.price { top: 2px; }
.panel-buttons.volume { top: 218px; }
.panel-buttons.macd { top: 326px; }

.panel-buttons button {
    width: 12px;
    height: 11px;
    background: #f4f4f4;
    border-right: 1px solid #333;
    border-bottom: 1px solid #333;
}

.bottom {
    display: flex;
    height: 18px;
    background: #f0f0f0;
}

.raised {
    width: 18px;
    background: #f0f0f0;
    border: 1px solid #fff;
    border-right-color: #666;
    border-bottom-color: #666;
}

.track {
    flex: 1;
    display: flex;
    justify-content: flex-end;
    background: repeating-conic-gradient(#fff 0 25%, #ededed 0 50%) 0 0 / 2px 2px;
}

.thumb {
    width: 30%;
    background: #f0f0f0;
    border: 1px solid #fff;
    border-right-color: #666;
    border-bottom: 2px solid #777;
}

.zoomer {
    width: 96px;
    margin: 0 4px 0 3px;
    border-bottom: 1px solid #f0f0f0;
    background: repeating-linear-gradient(90deg, #222 0 1px, transparent 1px 6px) 0 14px / 100% 3px no-repeat;
}

.zoomer input {
    appearance: none;
    display: block;
    width: 92px;
    height: 13px;
    background: linear-gradient(#777 0 1px, #ddd 1px 4px, #fff 4px) 0 4px / 100% 5px no-repeat;
}

.zoomer input::-webkit-slider-thumb {
    appearance: none;
    width: 4px;
    height: 10px;
    background: #eee;
    border: 1px solid #777;
}

.count {
    width: 38px;
    margin-right: 1px;
    padding-left: 2px;
    background: #fff;
    border: 1px solid #777;
    border-right-color: #ddd;
    border-bottom-color: #ddd;
}

.bare {
    width: 18px;
}

.rail {
    width: 22px;
    display: flex;
    flex-direction: column;
    align-items: center;
    background: #f0f0f0;
}

.auto {
    width: 22px;
    height: 19px;
    margin-bottom: 4px;
    background: #e8e8e8;
    border: 1px solid #999;
    font: bold 12px/16px "Liberation Sans", sans-serif;
}

.draw {
    height: 20px;
}

.draw text {
    font: bold 7px "Liberation Sans", sans-serif;
}

.down {
    width: 18px;
    height: 12px;
    margin-top: 9px;
    background: #ccc;
    border: 1px solid #aaa;
}

.status {
    display: flex;
    align-items: center;
    justify-content: space-between;
    height: 17px;
    margin-top: 4px;
    padding: 0 2px 0 1px;
    border-top: 1px solid #7d9db8;
}

.orb {
    width: 11px;
    height: 11px;
    border-radius: 50%;
    background: linear-gradient(#8fb6dc 45%, #dcedfa 55%);
    border: 1px solid #5f8ab4;
}

.tickers {
    background: #e6e7eb;
}

.ticker-row {
    display: flex;
    align-items: center;
    gap: 5px;
    height: 20px;
    padding: 0 10px 0 7px;
    border-bottom: 1px solid #777;
}

.ticker-row + .ticker-row {
    height: 25px;
}

.grip {
    width: 5px;
    height: 16px;
    background: radial-gradient(circle, #888 1px, transparent 1px) 0 0 / 4px 4px repeat-y;
}

.ticker {
    flex: 1;
    min-width: 0;
    display: flex;
    height: 19px;
    border: 1px solid #a0a5ae;
}

.name {
    width: 65px;
    font: bold 13px/17px "Noto Sans CJK KR", sans-serif;
    white-space: pre;
    background: linear-gradient(#e6e8ec, #c2c6cd 50%, #dcdfe4);
    border-right: 1px solid #a0a5ae;
}

.figures {
    flex: 1;
    min-width: 0;
    display: grid;
    grid-template-columns: 55px 13px 45px 42px 11px 46px 8px;
    align-items: center;
    padding-left: 5px;
    background: #f6f6fe;
    overflow: hidden;
    white-space: nowrap;
}

.rise { color: #e01000; }
.fall { color: #1c1cc0; }
.dark { color: #000; }

.drop {
    width: 17px;
    background: linear-gradient(#e6e8ec, #c9cdd4);
    border-left: 1px solid #a0a5ae;
}

.news {
    flex: 1;
    padding-left: 2px;
    background: #f6f6fe;
    overflow: hidden;
    white-space: nowrap;
}

.breadth {
    flex: 1;
    display: grid;
    grid-template-columns: 123fr 11fr 96fr;
    color: #fff;
    text-align: center;
    line-height: 17px;
}

.ups { background: #d82030; }
.flats { background: #3fa800; }
.downs { background: #6488dc; }

.side {
    width: 36px;
    font-weight: normal;
}
</style>
